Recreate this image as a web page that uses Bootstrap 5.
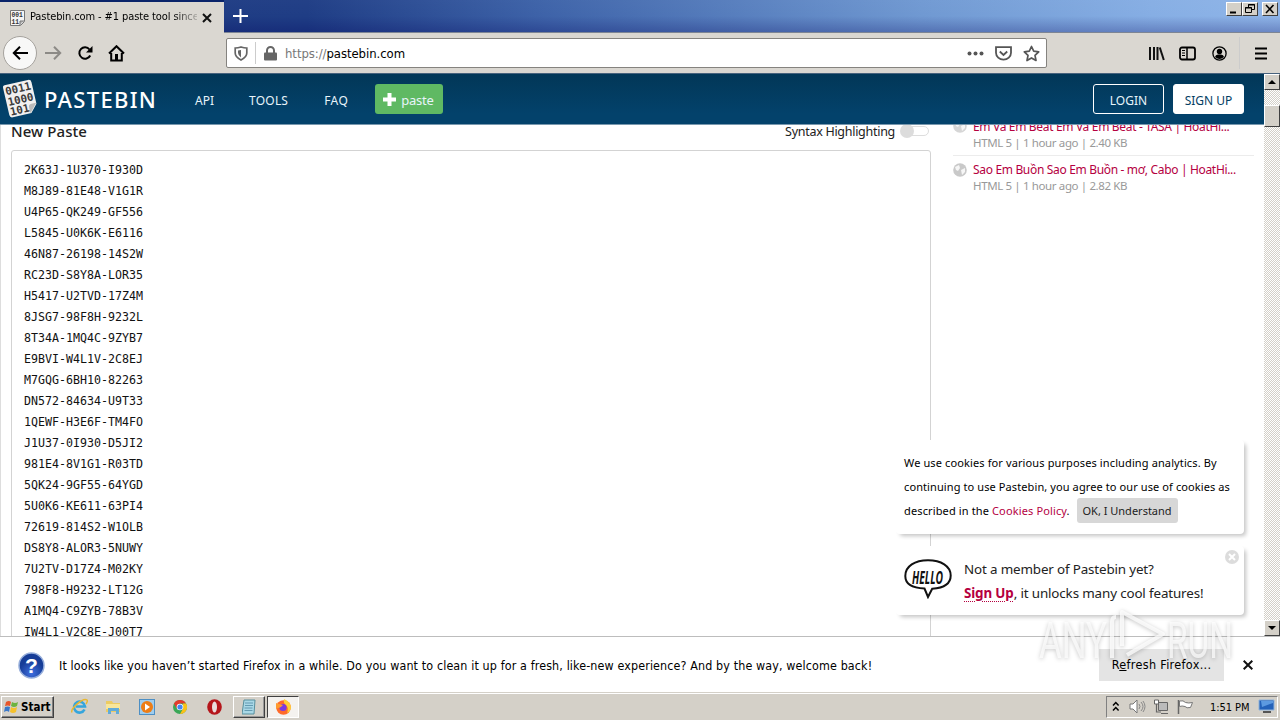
<!DOCTYPE html>
<html lang="en">
<head>
<meta charset="utf-8">
<title>Pastebin.com - #1 paste tool since 2002!</title>
<link href="https://cdn.jsdelivr.net/npm/bootstrap@5.3.0/dist/css/bootstrap.min.css" rel="stylesheet">
<script src="https://cdn.jsdelivr.net/npm/bootstrap@5.3.0/dist/js/bootstrap.bundle.min.js"></script>
<style>
body{width:1280px;height:720px;overflow:hidden;font-family:"Noto Sans","Open Sans",sans-serif;color:#222;background:#fff;font-size:12px;line-height:1.5}
svg{display:block;flex:none}
.ui{font-family:"DejaVu Sans Condensed","DejaVu Sans",sans-serif;color:#000;white-space:nowrap}
.titlebar{height:33px;background:linear-gradient(180deg,rgba(255,255,255,.02),rgba(0,0,60,0) 50%,rgba(0,0,90,.25)),linear-gradient(90deg,#1f3b82 0,#1f3d85 24%,#3d62a8 42%,#7099d2 72%,#86aee4 90%,#8fb5e8 100%);border-bottom:1px solid #7d8594}
.tab-main{width:224px;height:33px;background:#dad7d1;border-top:2px solid #0a246a;padding:0 12px 0 10px}
.tab-title{font-size:11px;width:167px;margin-left:5px;overflow:hidden;letter-spacing:-.1px;-webkit-mask-image:linear-gradient(90deg,#000 86%,rgba(0,0,0,.2))}
.plus-tab{margin:9px 0 0 9px}
.wins{padding:2px 2px 0 0}
.winbtn{width:16px;height:14px;background:#d4d0c8;border:1px solid;border-color:#fff #404040 #404040 #fff}
.toolbar{height:40px;background:#dad7d1;padding:0 12px 0 3px}
.back{width:34px;height:34px;border:1px solid #a5a29d;background:#f8f8f7}
.urlbar{width:821px;height:30px;margin-left:100px;background:#fff;border:1px solid #85837f;border-radius:2px;padding:0 6px 0 7px}
.url{font-size:13px;color:#777;letter-spacing:-.06px;margin:1px 0 0 8px}
.url b{font-weight:400;color:#000}
.vsep{width:1px;height:22px;background:#ccc;margin:0 8px 0 7px}
.page{height:563px;border-top:1px solid #47627d}
.view{width:1264px;background:#fff;box-shadow:inset 1px 0 #ddd}
.site{left:0;top:0;width:1264px;height:51px;background:linear-gradient(#023757,#03426b 80%);border-bottom:1px solid #7898ae;z-index:2;color:#fff;padding-right:20px}
.brand{font-size:22px;letter-spacing:1.3px;line-height:1;font-weight:500;margin-left:4px}
.site a{color:#e8f4fa;text-decoration:none;font-size:12px;padding-top:4px}
.site a.paste{width:68px;height:30px;background:#5fb963;border-radius:3px;padding:3px 0 0 8px;font-size:13px;gap:5px;letter-spacing:-.2px;margin-left:27px}
.paste svg{margin-top:-2px}
.sitebtn{width:71px;height:30px;border:1px solid #fff;border-radius:3px;display:flex;align-items:center;justify-content:center}
.site a.signup{background:#fff;color:#023e63;margin-left:9px}
.content{padding:48px 10px 0 11px}
.main-col{width:920px}
.head-row{height:28px;line-height:18px}
.head-row h2{font-size:15px;margin:0;line-height:18px;color:#222;letter-spacing:.08px}
.hl{font-size:12.5px;letter-spacing:-.28px;line-height:20px}
.toggle-sw{width:29px;height:14px;margin:2px 2px 0 5px;position:relative}
.toggle-sw::before{content:"";position:absolute;left:6px;top:2px;width:23px;height:10px;border:1px solid #ddd;border-radius:6px}
.toggle-sw::after{content:"";position:absolute;left:0;top:0;width:14px;height:14px;border-radius:50%;background:#dcdcdc}
.code{height:520px;border:1px solid #d3d3d3;border-radius:3px;padding:9px 12px;font-family:"DejaVu Sans Mono",monospace;font-size:11.63px;line-height:21px;color:#111;margin:0;overflow:hidden}
.side{width:301px;margin-left:22px;margin-top:-9px}
.item{height:43px;border-bottom:1px solid #ececec;padding-top:6px;line-height:16px;gap:6px}
.item a,.pol{color:#b5003f;text-decoration:none;white-space:nowrap}
.t1,.t2{letter-spacing:-.33px}
.item small{font-size:11.5px;color:#999;display:block;letter-spacing:-.37px;white-space:nowrap}
.pop{left:896px;width:348px;background:#fff;border-radius:4px;box-shadow:3px 3px 4px -1px rgba(0,0,0,.24);z-index:1}
.cookie{top:366px;height:94px;padding:11px 8px;font-size:11px;line-height:24px;white-space:nowrap;color:#000}
.c1{letter-spacing:.12px}.c2{letter-spacing:.1px}.c3{letter-spacing:.13px}
.ok{display:inline-block;vertical-align:top;background:#d7d7d7;border-radius:3px;height:25px;line-height:25px;width:101px;text-align:center;margin-left:4px;color:#222;margin-top:-1px}
.hello{top:472px;height:69px;font-size:13.4px;line-height:24px;padding:11px 8px 10px;gap:12px;white-space:nowrap}
.h1t{letter-spacing:-.15px}.h2t{letter-spacing:-.14px}
.h2t b{text-decoration:underline dotted 1px;text-underline-offset:3px}
.shut{right:5px;top:4px}
.scroll{width:16px;background:repeating-conic-gradient(#d4d0c8 0 25%,#fff 0 50%) 0 0/2px 2px}
.sb{width:16px;height:16px;background:#d4d0c8;border:1px solid;border-color:#fff #404040 #404040 #fff;display:flex;align-items:center;justify-content:center}
.thumb{height:22px;margin-top:15px}
.notice{height:57px;border-top:1px solid #bdbdbd;background:#fff;padding:0 27px 0 18px;font-size:12.4px}
.msg{margin:2px 0 0 14px;letter-spacing:.13px}
.refresh{width:125px;height:32px;background:#e4e4e4;font-size:12.5px;letter-spacing:.33px}
.taskbar{height:27px;background:#d4d0c8;box-shadow:0 -1px #d4d0c8,inset 0 1px #fff}
.start{width:53px;height:22px;margin-left:1px;border:1px solid;border-color:#fff #404040 #404040 #fff;box-shadow:inset -1px -1px #808080;font-size:11.5px;font-weight:700;padding-left:2px;gap:1px}
.st{margin-top:2px}
.task{width:32px;height:22px;border:1px solid;border-color:#fff #404040 #404040 #fff;box-shadow:inset -1px -1px #999}
.task.on{border-color:#404040 #fff #fff #404040;background:#f4f2ef;box-shadow:none}
.tray{width:172px;height:22px;border:1px solid;border-color:#808080 #fff #fff #808080;margin-right:2px;padding:0 2px 0 5px;font-size:11px}
.clock{margin:3px 0 0 16px;letter-spacing:-.05px}
.recorder{left:1030px;top:600px;z-index:5;filter:drop-shadow(0 1px 2px rgba(0,0,0,.3));pointer-events:none}
</style>
</head>
<body class="d-flex flex-column position-relative">

<!-- window title bar and tab -->
<div class="titlebar d-flex flex-shrink-0">
 <div class="tab-main ui d-flex align-items-center">
  <svg width="15" height="16" viewBox="0 0 15 16"><path d="M.5.5h14v11l-4 4H.5z" fill="#f4f4f4" stroke="#777"/><path d="M14 11h-4v4" fill="#bbb" stroke="#777"/><text x="1.5" y="7" font-size="6.3" font-family="Liberation Mono" font-weight="bold" fill="#333">001</text><text x="1.5" y="14" font-size="6.3" font-family="Liberation Mono" font-weight="bold" fill="#333">11</text></svg>
  <div class="tab-title">Pastebin.com - #1 paste tool since</div>
  <svg class="ms-auto" width="10" height="10"><path d="M1 1l8 8M9 1l-8 8" stroke="#111" stroke-width="2"/></svg>
 </div>
 <svg class="plus-tab" width="15" height="15"><path d="M7.500 0v14M0 7h15" stroke="#fff" stroke-width="2"/></svg>
 <div class="wins d-flex ms-auto">
  <div class="winbtn"><svg width="14" height="12"><path d="M3 9.500h6" stroke="#000" stroke-width="2"/></svg></div>
  <div class="winbtn"><svg width="14" height="12"><path d="M5.500 4V1.500h6v5H9M5 2h7M2.500 4.500h6v5h-6zM2 5h7" fill="none" stroke="#000"/></svg></div>
  <div class="winbtn ms-1"><svg width="14" height="12"><path d="M3 2l7.500 8M10.500 2L3 10" stroke="#000" stroke-width="1.600"/></svg></div>
 </div>
</div>

<!-- navigation toolbar -->
<div class="toolbar ui d-flex align-items-center flex-shrink-0">
 <div class="back rounded-circle d-flex align-items-center justify-content-center"><svg width="16" height="14"><path d="M16 7H2M8 .8L1.800 7 8 13.200" fill="none" stroke="#000" stroke-width="2"/></svg></div>
 <svg style="margin-left:8px" width="17" height="14"><path d="M0 7h15M9 .8L15.200 7 9 13.200" fill="none" stroke="#8c8a86" stroke-width="2"/></svg>
 <svg style="margin-left:15px" width="17" height="16"><path d="M13.200 10.500A5.700 5.700 0 1 1 12.500 4.500" fill="none" stroke="#000" stroke-width="2"/><path d="M15.500 1v6.500H9z" fill="#000"/></svg>
 <svg style="margin-left:14px" width="17" height="17"><path d="M1 8.500L8.500 1.200 16 8.500M3.200 8v7.500h10.600V8" fill="none" stroke="#000" stroke-width="2"/><path d="M7 15V9h3v6z"/></svg>
 <div class="urlbar d-flex align-items-center" style="margin-left:101px">
  <svg width="14" height="15"><path d="M1.200 2Q4 2 7 1q3 1 5.800 1v5q0 4-5.800 7-5.800-3-5.800-7z" fill="none" stroke="#666" stroke-width="1.700"/><path d="M7 4v7.500Q4 9 4 7V4.500z" fill="#666"/></svg>
  <div class="vsep"></div>
  <svg width="13" height="15"><path d="M3 7V4.500a3.500 3.500 0 0 1 7 0V7" fill="none" stroke="#666" stroke-width="2"/><rect y="6.500" width="13" height="8" rx="1" fill="#666"/></svg>
  <div class="url">https://<b>pastebin.com</b></div>
  <svg class="ms-auto" width="17" height="5"><g fill="#555"><circle cx="2.500" cy="2.500" r="2"/><circle cx="8.500" cy="2.500" r="2"/><circle cx="14.500" cy="2.500" r="2"/></g></svg>
  <svg style="margin-left:11px" width="17" height="15"><path d="M1 1.200h15v5.500a7.500 7 0 0 1-15 0z" fill="none" stroke="#555" stroke-width="1.800"/><path d="M4.800 5.500l3.700 3.500 3.700-3.500" fill="none" stroke="#555" stroke-width="1.800"/></svg>
  <svg style="margin-left:11px" width="17" height="17"><path d="M8.500 1.500l2.200 4.700 5 .6-3.700 3.500 1 5.200-4.500-2.600L4 15.500l1-5.200L1.300 6.800l5-.6z" fill="none" stroke="#555" stroke-width="1.700" stroke-linejoin="round"/></svg>
 </div>
 <svg style="margin-left:101px" width="17" height="15"><path d="M2 1v13M6 1v13M9.500 1v13" stroke="#111" stroke-width="2"/><path d="M11.800 1.500l4 12.500" stroke="#111" stroke-width="2"/></svg>
 <svg style="margin-left:14px" width="17" height="15"><rect x="1" y="1.500" width="15" height="12" rx="2" fill="none" stroke="#000" stroke-width="1.800"/><path d="M8 1v13" stroke="#000" stroke-width="1.500"/><path d="M3 4.500h3M3 7h3M3 9.500h3" stroke="#000"/></svg>
 <svg style="margin-left:16px" width="15" height="15"><circle cx="7.500" cy="7.500" r="6.600" fill="none" stroke="#000" stroke-width="1.300"/><circle cx="7.500" cy="5.500" r="2.700"/><path d="M3 11q.5-2.500 3-2.500h3q2.500 0 3 2.500-4.500 4-9 0z"/></svg>
 <div class="vsep" style="height:32px;margin:0 0 0 12px"></div>
 <svg class="ms-auto" style="margin-right:1px" width="12" height="13"><path d="M0 1.500h12M0 6.500h12M0 11.500h12" stroke="#000" stroke-width="2"/></svg>
</div>

<!-- web page -->
<div class="page d-flex flex-shrink-0 overflow-hidden">
 <div class="view position-relative overflow-hidden">
  <nav class="site position-absolute d-flex align-items-center">
   <svg style="margin-left:2px" width="38" height="42" viewBox="0 0 38 42"><g transform="rotate(-13 19 21)"><path d="M6 4h24q3 0 3 3v22l-7 8H7q-3 0-3-3V6q0-2 2-2z" fill="#f1f0ef"/><path d="M33 28l-8 9v-6q0-3 3-3z" fill="#bbb"/><g font-family="DejaVu Sans Mono,monospace" font-size="10.800" font-weight="bold" fill="#3b3b3b"><text x="5.500" y="14">0011</text><text x="5.500" y="25">1000</text><text x="5.500" y="35">101</text></g></g></svg>
   <span class="brand">PASTEBIN</span>
   <a href="#" style="margin-left:38px">API</a><a href="#" style="margin-left:35px;letter-spacing:.2px">TOOLS</a><a href="#" style="margin-left:36px;letter-spacing:.4px">FAQ</a>
   <a href="#" class="paste d-flex align-items-center"><svg width="13" height="13"><path d="M6.500 0v13M0 6.500h13" stroke="#fff" stroke-width="4"/></svg>paste</a>
   <a href="#" class="sitebtn ms-auto">LOGIN</a><a href="#" class="sitebtn signup">SIGN UP</a>
  </nav>
  <div class="content d-flex">
   <main class="main-col">
    <div class="head-row d-flex"><h2>New Paste</h2><span class="ms-auto hl">Syntax Highlighting</span><div class="toggle-sw"></div></div>
<pre class="code">2K63J-1U370-I930D
M8J89-81E48-V1G1R
U4P65-QK249-GF556
L5845-U0K6K-E6116
46N87-26198-14S2W
RC23D-S8Y8A-LOR35
H5417-U2TVD-17Z4M
8JSG7-98F8H-9232L
8T34A-1MQ4C-9ZYB7
E9BVI-W4L1V-2C8EJ
M7GQG-6BH10-82263
DN572-84634-U9T33
1QEWF-H3E6F-TM4FO
J1U37-0I930-D5JI2
981E4-8V1G1-R03TD
5QK24-9GF55-64YGD
5U0K6-KE611-63PI4
72619-814S2-W1OLB
DS8Y8-ALOR3-5NUWY
7U2TV-D17Z4-M02KY
798F8-H9232-LT12G
A1MQ4-C9ZYB-78B3V
IW4L1-V2C8E-J00T7</pre>
   </main>
   <aside class="side">
    <div class="item d-flex"><svg width="14" height="14"><circle cx="7" cy="7" r="6.800" fill="#d6d6d6"/><path d="M2 4l4-2 1 3-2 3-2-1zM8 7l4-2v4l-3 3z" fill="#f6f6f6"/></svg><div><a href="#" class="t1">Em Và Em Beat Em Và Em Beat - TASA | HoatHi...</a><small>HTML 5 | 1 hour ago | 2.40 KB</small></div></div>
    <div class="item d-flex border-0"><svg style="margin-top:1px" width="14" height="14"><circle cx="7" cy="7" r="6.800" fill="#c9c9c9"/><path d="M2 4l4-2 1 3-2 3-2-1zM8 7l4-2v4l-3 3z" fill="#f6f6f6"/></svg><div><a href="#" class="t2">Sao Em Buồn Sao Em Buồn - mơ, Cabo | HoatHi...</a><small>HTML 5 | 1 hour ago | 2.82 KB</small></div></div>
   </aside>
  </div>
  <div class="pop cookie position-absolute"><span class="c1">We use cookies for various purposes including analytics. By</span><br><span class="c2">continuing to use Pastebin, you agree to our use of cookies as</span><br><span class="c3">described in the <a href="#" class="pol">Cookies Policy</a>.</span> <span class="ok">OK, I Understand</span></div>
  <div class="pop hello position-absolute d-flex">
   <svg style="margin-top:2px" width="48" height="40" viewBox="0 0 48 40"><path d="M24 1.300C37 1.300 46.700 7 46.700 16.500c0 8-7 12.500-18.500 13.300L24 38l-3.500-8.500C8 29 1.300 25 1.300 17 1.300 7 11 1.300 24 1.300z" fill="#fff" stroke="#111" stroke-width="2"/><text x="8" y="24.500" textLength="31" lengthAdjust="spacingAndGlyphs" font-family="Open Sans" font-weight="bold" font-style="italic" font-size="18.500" fill="#111">HELLO</text></svg>
   <div><span class="h1t">Not a member of Pastebin yet?</span><br><span class="h2t"><b class="pol">Sign Up</b>, it unlocks many cool features!</span></div>
   <svg class="shut position-absolute" width="14" height="14"><circle cx="7" cy="7" r="7" fill="#dcdcdc"/><path d="M4 4l6 6M10 4l-6 6" stroke="#fff" stroke-width="2"/></svg>
  </div>
 </div>
 <div class="scroll d-flex flex-column">
  <div class="sb"><svg width="8" height="4"><path d="M0 4l4-4 4 4z"/></svg></div>
  <div class="sb thumb"></div>
  <div class="sb mt-auto"><svg width="8" height="4"><path d="M0 0l4 4 4-4z"/></svg></div>
 </div>
</div>

<!-- notification bar -->
<div class="notice ui d-flex align-items-center flex-shrink-0">
 <svg width="27" height="27"><defs><radialGradient id="q" cy=".8"><stop stop-color="#3f6fe0"/><stop offset="1" stop-color="#173d97"/></radialGradient></defs><circle cx="13.500" cy="13.500" r="12.500" fill="url(#q)" stroke="#96aedb" stroke-width="1.500"/><text x="13.500" y="21" text-anchor="middle" font-family="Liberation Sans" font-size="21" font-weight="bold" fill="#fff">?</text></svg>
 <span class="msg">It looks like you haven’t started Firefox in a while. Do you want to clean it up for a fresh, like-new experience? And by the way, welcome back!</span>
 <div class="refresh ms-auto d-flex align-items-center justify-content-center"><span>R<u>e</u>fresh Firefox...</span></div>
 <svg style="margin-left:19px" width="10" height="10"><path d="M.7.7l8.600 8.600M9.300.7L.7 9.300" stroke="#111" stroke-width="2"/></svg>
</div>

<!-- taskbar -->
<div class="taskbar ui d-flex align-items-center flex-shrink-0">
 <div class="start d-flex align-items-center"><svg width="16" height="16"><path d="M2 3q3-2 5 0L6 7Q4 6 1 7z" fill="#e8562a"/><path d="M8 3q3 2 6 0l-1 4q-3 2-6 0z" fill="#6cb33f"/><path d="M1 8q3-1 5 0l-1 5q-2-2-5 0z" fill="#3a78c9"/><path d="M7 8q3 2 6 0l-1 5q-3 2-6 0z" fill="#f5c12c"/></svg><span class="st">Start</span></div>
 <svg style="margin-left:17px" width="17" height="17"><path d="M13.500 11.500A5.500 5.500 0 1 1 14 8.500H5" fill="none" stroke="#35a5dc" stroke-width="2.600"/><path d="M1 14.500C-1 11 12-1 16 2q1 1-1 4" fill="none" stroke="#e9b72f" stroke-width="1.500"/></svg>
 <svg style="margin-left:17px" width="17" height="16"><path d="M1 2h6l1 2h7v9H1z" fill="#eccb62"/><path d="M1 5h14v5H1z" fill="#f8e69a"/><path d="M3 15V9h11v6h-3v-3H6v3z" fill="#62abd8"/></svg>
 <svg style="margin-left:17px" width="16" height="16"><rect x=".5" y=".5" width="15" height="15" fill="#9fcdee" stroke="#4d8fc4"/><circle cx="8" cy="8" r="6" fill="#ed7d16"/><path d="M6 4.500v7l5-3.500z" fill="#fff"/></svg>
 <svg style="margin-left:18px" width="14" height="14"><circle cx="7" cy="7" r="7" fill="#3aa757"/><path d="M.9 3.500a7 7 0 0 1 12.200 0H7L4 8.700z" fill="#e33b2e"/><path d="M13.100 3.500A7 7 0 0 1 7 14l3-5.300V3.500z" fill="#fbc116"/><circle cx="7" cy="7" r="3.300" fill="#fff"/><circle cx="7" cy="7" r="2.600" fill="#4285f4"/></svg>
 <svg style="margin-left:20px" width="15" height="16"><ellipse cx="7.500" cy="8" rx="7.300" ry="7.800" fill="#b5161b"/><ellipse cx="7.500" cy="8" rx="2.500" ry="5.600" fill="#e9dddd"/></svg>
 <div class="task d-flex align-items-center justify-content-center" style="margin-left:11px"><svg width="14" height="16"><path d="M2 1h11l-1 14H0z" fill="#a9d8e6" stroke="#578f9e"/><path d="M3 4h8M3 6.500h8M2.500 9h8M2.500 11.500h8" stroke="#538ca5" stroke-width=".8"/></svg></div>
 <div class="task on d-flex align-items-center justify-content-center" style="margin-left:2px"><svg width="17" height="16"><circle cx="8.500" cy="8.500" r="7.300" fill="#ff6a2a"/><path d="M9 0q7 3 7 9-1 4-4 5 2-5-1-8-3-2-2-6z" fill="#ffcf35"/><circle cx="8" cy="8.500" r="3.600" fill="#7a3be0"/><path d="M1 4l3 1 4 1-2 2-5 2z" fill="#ff9a2e"/></svg></div>
 <div class="tray d-flex align-items-center ms-auto">
  <svg width="8" height="11"><path d="M1 4.500l2.800-3 2.800 3M1 9.500l2.800-3 2.800 3" fill="none" stroke="#000" stroke-width="1.500"/></svg>
  <svg style="margin-left:9px" width="17" height="15"><path d="M1 5h3l4-4v13l-4-4H1z" fill="#fff" stroke="#777"/><path d="M10 5q2 2.500 0 5M12 3q4 4.500 0 9M14 2q4 5.500 0 11" fill="none" stroke="#888"/></svg>
  <svg style="margin-left:7px" width="17" height="16"><path d="M5.500 3.500h9v8h-9z" fill="#bbb" stroke="#666"/><path d="M1.500 1v4h4V1z" fill="#fff" stroke="#666"/><path d="M3.500 5v8H8M8 14.500h7" fill="none" stroke="#666" stroke-width="1.200"/></svg>
  <svg style="margin-left:7px" width="17" height="16"><path d="M1.500 1v14" stroke="#666" stroke-width="1.500"/><path d="M2.500 2q4-1 6 1.500 3 1 7 0l-2 5q-4 1-5.500-1-3-1-5.500 0z" fill="#fff" stroke="#777"/></svg>
  <span class="clock">1:51 PM</span>
  <svg class="ms-auto" width="17" height="15"><path d="M1 1h15v10H1z" fill="#2462b9" stroke="#8fb3db"/><path d="M3 2h12v2L4 8z" fill="#5d9ae0"/><path d="M5 13h8" stroke="#555" stroke-width="2"/></svg>
 </div>
</div>

<!-- recorder logo -->
<svg class="recorder position-absolute" width="215" height="66"><g font-family="Roboto" font-size="50" fill="#fff" fill-opacity=".7"><text x="9" y="58" textLength="68" lengthAdjust="spacingAndGlyphs">ANY</text><text x="137" y="58" textLength="66" lengthAdjust="spacingAndGlyphs">RUN</text></g><path d="M82 58V22q0-5 4-5M92 46V12l41 22-36 21" fill="none" stroke="#fff" stroke-opacity=".75" stroke-width="4" stroke-linejoin="round"/></svg>
</body>
</html>
